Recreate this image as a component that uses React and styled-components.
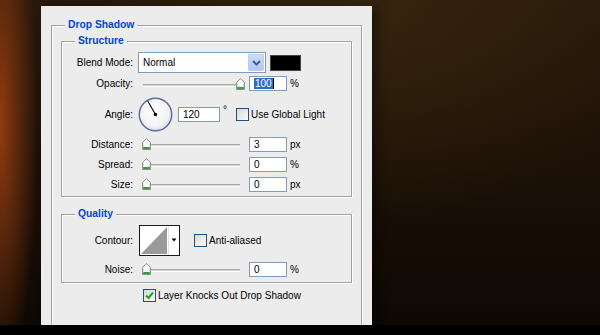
import React from "react";
import styled, { createGlobalStyle } from "styled-components";

const GlobalStyle = createGlobalStyle`
  html, body {
    margin: 0;
    padding: 0;
  }
  body {
    width: 600px;
    height: 335px;
    overflow: hidden;
    background: #000;
    font-family: "Liberation Sans", Arial, sans-serif;
  }
`

const Stage = styled.div`
  height: 325px;
  box-sizing: border-box;
  padding: 6px 0 0 41px;
  background:
    radial-gradient(ellipse 38px 260px at 0% 38%, rgba(150, 62, 16, 0.95), rgba(150, 62, 16, 0) 100%),
    radial-gradient(ellipse 320px 220px at 60% 0%, rgba(58, 40, 14, 0.8), rgba(58, 40, 14, 0) 100%),
    linear-gradient(to bottom, #27180a, #1a0f06 60%, #0e0804);
`

const Footer = styled.div`
  height: 10px;
  background: #000;
`

const Panel = styled.div`
  width: 331px;
  height: 319px;
  box-sizing: border-box;
  background: #ececec;
  padding: 13px 10px 0 10px;
  overflow: hidden;
  box-shadow: 6px 0 10px rgba(0, 0, 0, 0.35);
`

const Group = styled.fieldset`
  margin: ${p => p.$mt || 0}px 0 0;
  padding: ${p => p.$pad};
  border: 1px solid #a2a29d;
  box-shadow: inset 1px 1px 0 #fff, 1px 1px 0 #fff;
  min-width: 0;
`

const Legend = styled.legend`
  margin-left: ${p => p.$ml}px;
  padding: 0 3px;
  font-weight: bold;
  font-size: 10.3px;
  line-height: 12px;
  color: #0046d5;
  background: #ececec;
`

const Row = styled.div`
  display: flex;
  align-items: center;
  height: ${p => p.$h || 20}px;
  padding-left: ${p => p.$indent || 0}px;
`

const Label = styled.div`
  flex: none;
  width: 71px;
  margin-right: 5px;
  text-align: right;
  font-size: 10px;
  color: #000;
`

const Text = styled.span`
  font-size: 10px;
  color: #000;
  margin-left: ${p => p.$ml || 0}px;
  align-self: ${p => (p.$top ? "flex-start" : "auto")};
  margin-top: ${p => p.$top || 0}px;
`

const Select = styled.div`
  flex: none;
  width: 128px;
  height: 21px;
  box-sizing: border-box;
  border: 1px solid #7f9db9;
  background: #fff;
  display: flex;
  align-items: center;
  padding: 1px;
`

const SelectText = styled.span`
  flex: 1;
  padding-left: 3px;
  font-size: 10px;
`

const DropButton = styled.div`
  width: 16px;
  align-self: stretch;
  box-sizing: border-box;
  border: 1px solid #bccdf5;
  border-radius: 1px;
  background: linear-gradient(#cfdcfc, #b2c6f4);
  display: flex;
  align-items: center;
  justify-content: center;
`

const Swatch = styled.div`
  flex: none;
  width: 31px;
  height: 16px;
  box-sizing: border-box;
  margin-left: 4px;
  background: #000;
  border: 1px solid #444;
`

const Slider = styled.div`
  position: relative;
  flex: none;
  width: 107px;
  height: 20px;
`

const Track = styled.div`
  position: absolute;
  left: 5px;
  right: 5px;
  top: 10px;
  height: 1px;
  background: #d4d4d0;
  border-top: 1px solid #a8a8a3;
  border-bottom: 1px solid #fff;
`

const Thumb = styled.svg`
  position: absolute;
  top: 4px;
  left: ${p => p.$pos}px;
`

const Field = styled.div`
  flex: none;
  width: ${p => p.$w || 38}px;
  height: 15px;
  box-sizing: border-box;
  margin-left: ${p => p.$ml ?? 4}px;
  border: 1px solid #7f9db9;
  background: #fff;
  padding-left: 4px;
  display: flex;
  align-items: center;
  font-size: 10px;
  line-height: 11px;
`

const Selected = styled.span`
  background: #316ac5;
  color: #fff;
  padding: 0 1px;
`

const Caret = styled.span`
  width: 1px;
  height: 11px;
  background: #000;
`

const Box = styled.div`
  flex: none;
  width: 13px;
  height: 13px;
  box-sizing: border-box;
  margin-left: ${p => p.$ml || 0}px;
  border: 1px solid #1c5180;
  background: linear-gradient(135deg, #dadad4, #fafaf8);
  display: flex;
  align-items: center;
  justify-content: center;
`

const Spacer = styled.div`
  flex: none;
  width: ${p => p.$w}px;
`

const SliderThumb = ({ pos }) => (
  <Thumb $pos={pos} width="9" height="12" viewBox="0 0 9 12">
    <path d="M4.5 0.7 L8.5 4.5 L8.5 11.5 L0.5 11.5 L0.5 4.5 Z" fill="#fdfdfd" stroke="#8c8c8c" />
    <rect x="1" y="9" width="7" height="2" fill="#2ea043" />
    <path d="M1 5 L1 11 M8 5 L8 11" stroke="#7cc28a" strokeWidth="0.8" />
  </Thumb>
)

const SliderControl = ({ value }) => (
  <Slider>
    <Track />
    <SliderThumb pos={4 + (value / 100) * 94} />
  </Slider>
)

const Checkbox = ({ checked, ml }) => (
  <Box $ml={ml}>
    {checked && (
      <svg width="9" height="9" viewBox="0 0 9 9">
        <path d="M1 4.5 L3.5 7 L8 1.5" fill="none" stroke="#21a121" strokeWidth="2" />
      </svg>
    )}
  </Box>
)

const Dial = ({ angle }) => {
  const r = (angle * Math.PI) / 180
  const x = 17.5 + Math.cos(r) * 15.5
  const y = 17.5 - Math.sin(r) * 15.5
  return (
    <svg width="35" height="35" viewBox="0 0 35 35">
      <defs>
        <radialGradient id="dialFill" cx="45%" cy="40%" r="65%">
          <stop offset="0" stopColor="#ffffff" />
          <stop offset="0.7" stopColor="#f2f2f4" />
          <stop offset="1" stopColor="#d6d8e4" />
        </radialGradient>
      </defs>
      <circle cx="17.5" cy="17.5" r="16.2" fill="url(#dialFill)" stroke="#5d6d9c" strokeWidth="1.5" />
      <line x1="17.5" y1="17.5" x2={x} y2={y} stroke="#000" strokeWidth="1.1" />
      <circle cx="17.5" cy="17.5" r="1.7" fill="#000" />
    </svg>
  )
}

const ContourPicker = () => (
  <svg width="41" height="31" viewBox="0 0 41 31" style={{ marginLeft: 1 }}>
    <rect x="0.5" y="0.5" width="40" height="30" fill="#fff" stroke="#1a1a1a" />
    <polygon points="2,29 28,2 28,29" fill="#9a9a9a" />
    <line x1="29.5" y1="1" x2="29.5" y2="30" stroke="#e4e4e4" />
    <polygon points="32.5,13.5 37.5,13.5 35,16.5" fill="#000" />
  </svg>
)

const Chevron = () => (
  <svg width="9" height="6" viewBox="0 0 9 6">
    <path d="M1 1 L4.5 4.5 L8 1" fill="none" stroke="#4b5e8c" strokeWidth="2" />
  </svg>
)

const sliderRows = [
  { label: "Distance:", value: "3", unit: "px" },
  { label: "Spread:", value: "0", unit: "%" },
  { label: "Size:", value: "0", unit: "px" },
]

const App = () => {
  return (
    <>
      <GlobalStyle />
      <Stage>
        <Panel>
          <Group $pad="4px 9px 40px 9px">
            <Legend $ml={4}>Drop Shadow</Legend>

            <Group $pad="5px 0 2px 0">
              <Legend $ml={13}>Structure</Legend>
              <Row $h={21}>
                <Label>Blend Mode:</Label>
                <Select>
                  <SelectText>Normal</SelectText>
                  <DropButton>
                    <Chevron />
                  </DropButton>
                </Select>
                <Swatch />
              </Row>
              <Row $h={21}>
                <Label>Opacity:</Label>
                <SliderControl value={100} />
                <Field>
                  <Selected>100</Selected>
                  <Caret />
                </Field>
                <Text $ml={3}>%</Text>
              </Row>
              <Row $h={40}>
                <Label>Angle:</Label>
                <Dial angle={120} />
                <Field $w={42} $ml={5}>120</Field>
                <Text $ml={3} $top={10}>°</Text>
                <Checkbox ml={9} />
                <Text $ml={2}>Use Global Light</Text>
              </Row>
              {sliderRows.map(row => (
                <Row key={row.label}>
                  <Label>{row.label}</Label>
                  <SliderControl value={0} />
                  <Field>{row.value}</Field>
                  <Text $ml={3}>{row.unit}</Text>
                </Row>
              ))}
            </Group>

            <Group $mt={11} $pad="5px 0 3px 0">
              <Legend $ml={13}>Quality</Legend>
              <Row $h={31}>
                <Label>Contour:</Label>
                <ContourPicker />
                <Spacer $w={14} />
                <Checkbox />
                <Text $ml={2}>Anti-aliased</Text>
              </Row>
              <Row $h={20} style={{ marginTop: 3 }}>
                <Label>Noise:</Label>
                <SliderControl value={0} />
                <Field>0</Field>
                <Text $ml={3}>%</Text>
              </Row>
            </Group>

            <Row $h={20} $indent={82} style={{ marginTop: 2 }}>
              <Checkbox checked />
              <Text $ml={2}>Layer Knocks Out Drop Shadow</Text>
            </Row>
          </Group>
        </Panel>
      </Stage>
      <Footer />
    </>
  )
}

export default App
